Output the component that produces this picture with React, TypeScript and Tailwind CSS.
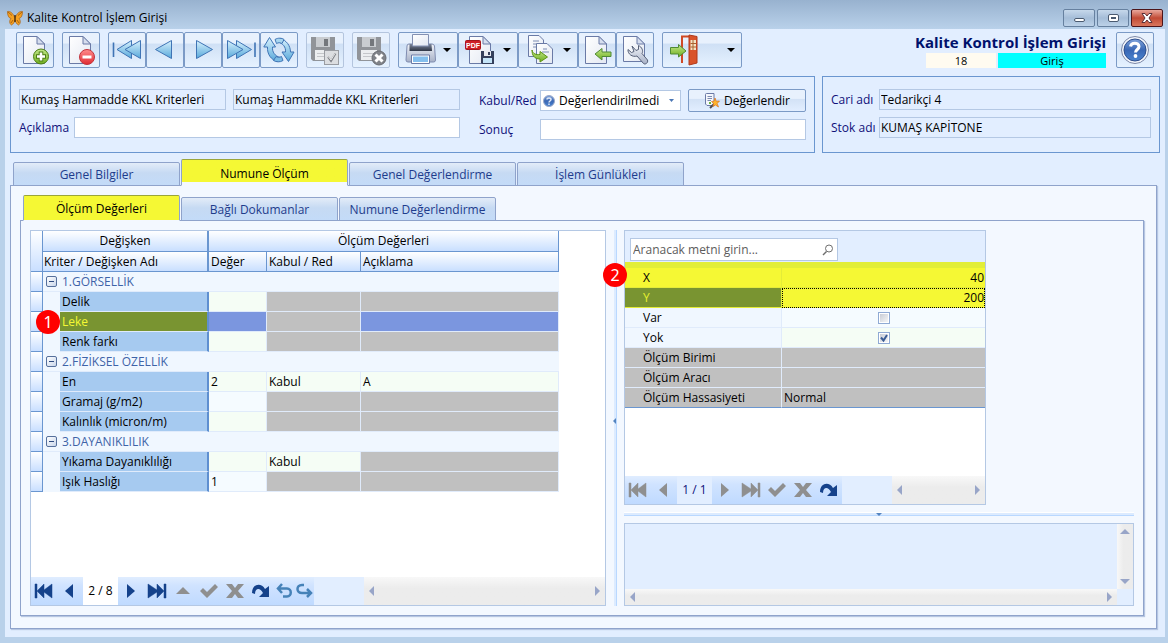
import React from "react";
import clsx from "clsx";

type Row = {
  group?: boolean;
  focused?: boolean;
  name: string;
  value?: string;
  verdict?: string;
  note?: string;
};

const rows: Row[] = [
  { group: true, name: "1.GÖRSELLİK" },
  { name: "Delik" },
  { name: "Leke", focused: true },
  { name: "Renk farkı" },
  { group: true, name: "2.FİZİKSEL ÖZELLİK" },
  { name: "En", value: "2", verdict: "Kabul", note: "A" },
  { name: "Gramaj (g/m2)" },
  { name: "Kalınlık (micron/m)" },
  { group: true, name: "3.DAYANIKLILIK" },
  { name: "Yıkama Dayanıklılığı", verdict: "Kabul" },
  { name: "Işık Haslığı", value: "1" },
];

const blueRows = ["Gramaj (g/m2)", "Işık Haslığı"];

/* ---------- toolbar icons ---------- */

function Svg({ children, size = 32, vb = "0 0 32 32" }: { children: React.ReactNode; size?: number; vb?: string }) {
  return (
    <svg width={size} height={size} viewBox={vb} fill="none" className="shrink-0" aria-hidden="true">
      {children}
    </svg>
  );
}

function Gradients() {
  return (
    <svg width="0" height="0" className="absolute" aria-hidden="true">
      <defs>
        <linearGradient id="page" x1="0" y1="0" x2="1" y2="1">
          <stop offset="0" stopColor="#ffffff" />
          <stop offset="1" stopColor="#e3e8f2" />
        </linearGradient>
        <linearGradient id="sky" x1="0" y1="0" x2="0" y2="1">
          <stop offset="0" stopColor="#d8f1fd" />
          <stop offset="1" stopColor="#56a8da" />
        </linearGradient>
        <linearGradient id="green" x1="0" y1="0" x2="0" y2="1">
          <stop offset="0" stopColor="#c3e88c" />
          <stop offset="1" stopColor="#6fae1e" />
        </linearGradient>
        <linearGradient id="red" x1="0" y1="0" x2="0" y2="1">
          <stop offset="0" stopColor="#ff8d8d" />
          <stop offset="1" stopColor="#e02a32" />
        </linearGradient>
        <linearGradient id="help" x1="0" y1="0" x2="0" y2="1">
          <stop offset="0" stopColor="#7fa3dc" />
          <stop offset="0.5" stopColor="#3a67b4" />
          <stop offset="1" stopColor="#4a84d0" />
        </linearGradient>
        <linearGradient id="steel" x1="0" y1="0" x2="0" y2="1">
          <stop offset="0" stopColor="#f2f4f9" />
          <stop offset="1" stopColor="#a6b0c6" />
        </linearGradient>
        <linearGradient id="band" x1="0" y1="0" x2="0" y2="1">
          <stop offset="0" stopColor="#7d879c" />
          <stop offset="1" stopColor="#2f3646" />
        </linearGradient>
      </defs>
    </svg>
  );
}

const Page = () => (
  <>
    <path d="M4.5 2.5H18L25.5 10V29.5H4.5Z" fill="url(#page)" stroke="#6a7aa6" />
    <path d="M18 2.5V10H25.5Z" fill="#d6deee" stroke="#6a7aa6" />
  </>
);

const NewIcon = () => (
  <Svg>
    <Page />
    <circle cx="22" cy="22.5" r="7.5" fill="url(#green)" stroke="#4d7d14" />
    <path d="M22 17.5V27.5M17 22.5H27" stroke="#4d7d14" strokeWidth="4.5" />
    <path d="M22 18.5V26.5M18 22.5H26" stroke="#fff" strokeWidth="2.6" />
  </Svg>
);

const DeleteIcon = () => (
  <Svg>
    <Page />
    <circle cx="22" cy="23" r="7.5" fill="url(#red)" stroke="#c2343c" />
    <rect x="17.5" y="21.5" width="9" height="3" fill="#fff" />
  </Svg>
);

const FirstIcon = () => (
  <Svg>
    <path d="M2.5 8.5V23" stroke="#3f74b5" strokeWidth="1.6" />
    <path d="M20.5 6.5V24.5L6 15.5Z" fill="url(#sky)" stroke="#3f74b5" />
    <path d="M29.5 6.5V24.5L14 15.5Z" fill="url(#sky)" stroke="#3f74b5" />
  </Svg>
);

const PrevIcon = () => (
  <Svg>
    <path d="M22.5 6.5V24.5L6.5 15.5Z" fill="url(#sky)" stroke="#3f74b5" />
  </Svg>
);

const NextIcon = () => (
  <Svg>
    <path d="M9.5 6.5V24.5L25.5 15.5Z" fill="url(#sky)" stroke="#3f74b5" />
  </Svg>
);

const LastIcon = () => (
  <Svg>
    <path d="M30 8.5V23" stroke="#3f74b5" strokeWidth="1.6" />
    <path d="M11.5 6.5V24.5L26.5 15.5Z" fill="url(#sky)" stroke="#3f74b5" />
    <path d="M2.5 6.5V24.5L18 15.5Z" fill="url(#sky)" stroke="#3f74b5" />
  </Svg>
);

const RefreshIcon = () => (
  <Svg>
    <path d="M6.5 3.5L12.5 13H9.5C9 18 12 22 17 23.5L14.5 27.5C8 26 4 20 4.5 13H.8Z" fill="url(#sky)" stroke="#3f74b5" />
    <path d="M25.5 27.5L19 18H22.5C23 13 20 9.5 15 8L17 4.5C23.5 6 27.5 12 27.5 18H31Z" fill="url(#sky)" stroke="#3f74b5" />
    <path d="M12 5.5C15 3.5 19 4 21 5.5L19 9.5C17 8.5 15.5 8.5 13.5 9.5Z" fill="#a8d6f0" stroke="#3f74b5" />
    <path d="M20 26.5C17 28.5 13 28 10.5 26.5L13 22.5C15 23.5 16.5 23.5 18.5 22.5Z" fill="#7cbce4" stroke="#3f74b5" />
  </Svg>
);

const Floppy = () => (
  <>
    <path d="M2 3H26V27H4L2 25Z" fill="#919499" />
    <rect x="7" y="3" width="14" height="10" fill="#c9ccd0" />
    <rect x="15" y="5" width="4" height="7" fill="#74777c" />
    <rect x="6" y="16" width="16" height="10" fill="#eceef0" />
    <path d="M8 19.5H20M8 22.5H20" stroke="#c4c6ca" />
  </>
);

const SaveIcon = () => (
  <Svg>
    <Floppy />
    <rect x="15.5" y="16.5" width="14" height="14" fill="#dcdee1" stroke="#999ca2" />
    <path d="M19 23L22 27L26.500 19.5" stroke="#808389" strokeWidth="2" />
    <path d="M19.5 23L22 26L26 19.5" stroke="#fff" strokeWidth=".8" />
  </Svg>
);

const CancelSaveIcon = () => (
  <Svg>
    <Floppy />
    <circle cx="24" cy="24" r="7" fill="#808389" stroke="#686b71" />
    <path d="M20.5 20.500L27.5 27.5M27.5 20.5L20.5 27.5" stroke="#fff" strokeWidth="3" />
  </Svg>
);

const PrinterIcon = () => (
  <Svg>
    <path d="M2 12Q2 10 4 10H27Q29 10 29.5 12L30.5 26Q30.5 28 28.5 28H3Q1 28 1 26Z" fill="url(#steel)" stroke="#7f8cb0" />
    <path d="M4.500 10H26.5L27 17H4.5Z" fill="url(#band)" />
    <path d="M7.5 .5H23.5V12H7.5Z" fill="url(#page)" stroke="#8390b2" />
    <path d="M6.5 21H24.5V29.5H6.5Z" fill="#fff" stroke="#6a7aa6" />
    <path d="M8 22.5H23V28H8Z" fill="#84bfee" />
  </Svg>
);

const PdfIcon = () => (
  <Svg>
    <Page />
    <rect x=".5" y="6.500" width="15" height="9" rx="1" fill="#cf1f27" stroke="#a3141b" />
    <text x="8" y="14" textAnchor="middle" fontSize="7" fontWeight="700" fill="#fff" fontFamily="Liberation Sans, sans-serif">PDF</text>
    <path d="M16 17H29V30H17L16 29Z" fill="#35405c" />
    <rect x="19" y="17" width="7" height="5" fill="#e8ebf2" />
    <rect x="23" y="18" width="2" height="3" fill="#35405c" />
    <rect x="18" y="24" width="9" height="5" fill="#c4e4f8" />
  </Svg>
);

const CopyIcon = () => (
  <Svg>
    <path d="M3.5 1.5H14L18.5 6V22.5H3.5Z" fill="url(#page)" stroke="#6a7aa6" />
    <path d="M8 7H14M8 10H14M8 13H12" stroke="#7d8cb3" />
    <path d="M11.5 9.5H22L27.5 15V29.5H11.5Z" fill="url(#page)" stroke="#6a7aa6" />
    <path d="M18 15H22M17 18H24" stroke="#7d8cb3" />
    <path d="M7 16C8 20 11 21 15 20.5V17.5L22.5 23L15 28V25C9 25 7 21 7 16Z" fill="url(#green)" stroke="#5d9413" />
  </Svg>
);

const ImportIcon = () => (
  <Svg>
    <Page />
    <path d="M14 20L21 14.500V18H30V22.5H21V26Z" fill="url(#green)" stroke="#4f8a35" />
  </Svg>
);

const ToolsIcon = () => (
  <Svg>
    <path d="M4.5 2.5H18L25.5 10V27.5H4.5Z" fill="url(#page)" stroke="#6a7aa6" />
    <path d="M18 2.5V10H25.5Z" fill="#d6deee" stroke="#6a7aa6" />
    <path d="M13 12L17 16.5L19.5 15.5V11.5C23 13 24.5 17 23 19.5L28.5 26C29.5 29 26 31 24.500 29.5L18 22C13.5 23.5 8.5 20 9 15.5L12.5 18.5L15 17.5Z" fill="url(#steel)" stroke="#566078" />
  </Svg>
);

const ExitIcon = () => (
  <Svg>
    <path d="M13 29V2.5H20" stroke="#d04a26" strokeWidth="2" />
    <path d="M20 1L28 2.5V29L20 31Z" fill="#d9532a" stroke="#b0391a" />
    <rect x="21.5" y="6" width="5.5" height="10" fill="#f4e3c4" />
    <path d="M24 6V16M21.5 9.500H27M21.5 13H27" stroke="#a8622f" />
    <path d="M1.5 13.5H9.5V10.5L17 17L9.5 23V20H1.5Z" fill="url(#green)" stroke="#4f8a35" />
  </Svg>
);

const HelpIcon = () => (
  <Svg>
    <circle cx="16" cy="16" r="13.5" fill="#f4f6fb" stroke="#7c88a8" />
    <circle cx="16" cy="16" r="11" fill="url(#help)" stroke="#2e4e8c" />
    <path d="M11.5 12.5C12 8 20 8 20 12.5C20 15.5 16.5 15.5 16.5 18.500" stroke="#fff" strokeWidth="3" />
    <circle cx="16.5" cy="22" r="1.9" fill="#fff" />
  </Svg>
);

const Butterfly = () => (
  <Svg size={16} vb="0 0 16 16">
    <path d="M7.500 7C6 3 3 1 .5 1.5C.5 5 1.5 8 4 8.500C2 10.5 2.5 14 4.5 15C6.500 14 7.5 12 8 10C8.5 12 9.5 14 11.5 15C13.5 14 14 10.5 12 8.5C14.5 8 15.5 5 15.500 1.5C13 1 10 3 8.5 7Z" fill="#f5a020" stroke="#a85f10" strokeWidth=".7" />
    <path d="M1 2L5 5.500M15 2L11 5.5M4 13L6 10M12 13L10 10" stroke="#8a4a0a" strokeWidth=".7" />
    <path d="M8 5V12" stroke="#3a2208" strokeWidth="1.3" />
  </Svg>
);

const EvaluateIcon = () => (
  <Svg size={16} vb="0 0 16 16">
    <path d="M1.5 1.5Q1.5 .5 2.5 .5H10V12.5H3L1.5 11Z" fill="#f5f7fc" stroke="#6a7aa6" />
    <path d="M3.5 3.5H8M3.5 5.5H8M3.5 7.5H7" stroke="#7c8bb0" />
    <path d="M5 10H7" stroke="#6bb53c" strokeWidth="2" />
    <path d="M6 15L10 11" stroke="#4c4c55" strokeWidth="2" />
    <path d="M11 5L12.2 8.2L15.5 8L13.2 10.4L14.5 14L11.5 12L9 13.5L9.5 10.5L7.5 8.5L10 8.2Z" fill="#ffb42c" stroke="#d9731c" strokeWidth=".7" />
  </Svg>
);

/* ---------- navigator icons ---------- */

type Glyph = "first" | "prev" | "next" | "last" | "up" | "check" | "cross" | "turn" | "undo" | "redo";

const glyphs: Record<Glyph, React.ReactNode> = {
  first: <path d="M1 3H3V10L10 3V9L18 3V17L10 11V17L3 10V17H1Z" fill="currentColor" stroke="currentColor" strokeWidth=".5" />,
  prev: <path d="M13 3V17L5 10Z" fill="currentColor" />,
  next: <path d="M6 3V17L14 10Z" fill="currentColor" />,
  last: <path d="M19 3H17V10L10 3V9L1 3V17L10 11V17L17 10V17H19Z" fill="currentColor" stroke="currentColor" strokeWidth=".5" />,
  up: <path d="M3 13L10 6L17 13Z" fill="currentColor" />,
  check: <path d="M1 10L4 7L8 11L16 3L19 6L8 17Z" fill="currentColor" />,
  cross: <path d="M1 3H7L10 7L13 3H19L13 10L19 17H13L10 13L7 17H1L7 10Z" fill="currentColor" />,
  turn: <path d="M1 12C1 3 10 1 14 8L18 5V16H8L12 12C9 6 4 7 4 13Z" fill="currentColor" />,
  undo: <path d="M8 3L4 7.5L8 12M4 7.5H13C18 7.5 18 15.5 13 15.5H9" stroke="currentColor" strokeWidth="2.5" />,
  redo: <path d="M10 4H8C2 4 2 12 8 12H17M13 8L17 12L13 16" stroke="currentColor" strokeWidth="2.5" />,
};

const glyphLabels: Record<Glyph, string> = {
  first: "İlk kayıt",
  prev: "Önceki kayıt",
  next: "Sonraki kayıt",
  last: "Son kayıt",
  up: "Düzenle",
  check: "Kaydet",
  cross: "İptal",
  turn: "Yenile",
  undo: "Geri al",
  redo: "Yinele",
};

function NavButton({ glyph, color }: { glyph: Glyph; color: string }) {
  const narrow = glyph === "undo" || glyph === "redo";
  return (
    <button
      type="button"
      aria-label={glyphLabels[glyph]}
      className={clsx("flex h-7 items-center justify-center bg-linear-to-b from-[#e0edff] via-[#d0e3ff] via-30% to-[#bfdaff]", narrow ? "w-5" : "w-[26px]", color)}
    >
      <Svg size={20} vb="0 0 20 20">{glyphs[glyph]}</Svg>
    </button>
  );
}

function Arrow({ d }: { d: "left" | "right" | "up" | "down" }) {
  const paths = { left: "M7 0V10L2 5Z", right: "M3 0V10L8 5Z", up: "M0 7H10L5 2Z", down: "M0 3H10L5 8Z" };
  return (
    <svg width="10" height="10" viewBox="0 0 10 10" className="text-[#98a5c8]" aria-hidden="true">
      <path d={paths[d]} fill="currentColor" />
    </svg>
  );
}

function HScroll() {
  return (
    <div className="flex min-w-0 flex-1 items-center justify-between bg-linear-to-b from-[#f8f8f8] to-[#ececec] to-40% px-[3px]">
      <Arrow d="left" />
      <Arrow d="right" />
    </div>
  );
}

const navy = "text-[#15428b]";
const gray = "text-[#8f8f8f]";

/* ---------- small controls ---------- */

function ToolButton({ label, wide, drop, disabled, children }: { label: string; wide?: boolean; drop?: boolean; disabled?: boolean; children: React.ReactNode }) {
  return (
    <button
      type="button"
      aria-label={label}
      disabled={disabled}
      className={clsx(
        "flex h-9 items-center rounded-xs border bg-linear-to-b from-[#e8f1fd] from-30% via-[#cfe0f5] via-32% to-[#e6f2ff]",
        wide ? "w-20 justify-between px-1.5" : drop ? "w-[60px] justify-between px-1.5" : "w-[38px] justify-center",
        disabled ? "border-[#b4c5de]" : "border-[#7b9ac6]"
      )}
    >
      {children}
      {drop && (
        <svg width="8" height="4" viewBox="0 0 8 4" aria-hidden="true">
          <path d="M0 0H8L4 4Z" fill="#000" />
        </svg>
      )}
    </button>
  );
}

function Tabs({ items, active, size }: { items: string[]; active: number; size: "lg" | "sm" }) {
  return (
    <div role="tablist" className={clsx("relative flex items-end gap-px px-[3px]", size === "lg" ? "h-[27px]" : "h-[26px]")}>
      {items.map((t, i) => (
        <button
          key={t}
          type="button"
          role="tab"
          aria-selected={i === active}
          className={clsx(
            "rounded-t-xs border pt-0.5",
            size === "lg" ? "w-[167px]" : "w-[157px]",
            i === active
              ? "h-full border-x-[#8fa3cb] border-t-[#9aa53a] border-b-[#f3f8ff] text-black"
              : "h-6 border-[#8fa3cb] bg-linear-to-b from-[#e3ecf8] via-[#c6daf3] via-45% to-[#c3dbf8] text-[#1e3c8c]",
            i === active && (size === "lg" ? "bg-linear-to-b from-[#f5f834] from-88% to-[#f3f8ff] to-88%" : "bg-[#f5f834]")
          )}
        >
          {t}
        </button>
      ))}
    </div>
  );
}

function Badge({ n, className }: { n: number; className: string }) {
  return (
    <span className={clsx("absolute z-10 flex size-6 items-center justify-center rounded-full bg-[#ff0000] font-['Noto_Sans',sans-serif] text-base leading-none text-white", className)}>
      {n}
    </span>
  );
}

const field = "h-[21px] min-w-0 border border-[#b4c8e4] px-px text-black";

function CaptionButton({ label, close, children }: { label: string; close?: boolean; children: React.ReactNode }) {
  return (
    <button
      type="button"
      aria-label={label}
      className={clsx(
        "flex h-[18px] w-8 items-center justify-center rounded-xs border",
        close ? "border-[#4c1419] bg-linear-to-b from-[#e8a79c] via-[#c14a35] via-50% to-[#d9765c]" : "border-[#66809f] bg-linear-to-b from-[#c6d8eb] via-[#a5bdd8] via-50% to-[#bcd1e8]"
      )}
    >
      {children}
    </button>
  );
}

/* ---------- grids ---------- */

const headCell = "border-b border-[#6a96d0] bg-linear-to-b from-white to-[#c9dfff] p-0 font-normal";

function MeasureTable() {
  return (
    <table className="w-[528px] table-fixed border-separate border-spacing-0 leading-[18px]">
      <colgroup>
        <col className="w-3" />
        <col className="w-[17px]" />
        <col className="w-[149px]" />
        <col className="w-[58px]" />
        <col className="w-[94px]" />
        <col className="w-[198px]" />
      </colgroup>
      <thead>
        <tr>
          <th rowSpan={2} className={clsx(headCell, "border-r")} />
          <th colSpan={2} className={clsx(headCell, "h-[21px] border-r-2 text-center")}>Değişken</th>
          <th colSpan={3} className={clsx(headCell, "border-r text-center")}>Ölçüm Değerleri</th>
        </tr>
        <tr>
          <th colSpan={2} className={clsx(headCell, "h-5 border-r-2 pl-px text-left")}>Kriter / Değişken Adı</th>
          <th className={clsx(headCell, "border-r pl-0.5 text-left")}>Değer</th>
          <th className={clsx(headCell, "border-r pl-0.5 text-left")}>Kabul / Red</th>
          <th className={clsx(headCell, "border-r pl-0.5 text-left")}>Açıklama</th>
        </tr>
      </thead>
      <tbody>
        {rows.map((r) => {
          const tint = blueRows.includes(r.name) ? "bg-[#f5fbff]" : "bg-[#f5fdf5]";
          const line = "h-5 border-b border-[#e0ebfb] p-0";
          const cell = clsx(line, "border-r pl-0.5");
          return (
            <tr key={r.name}>
              <td className="relative h-5 border-r border-b border-[#6a96d0] bg-linear-to-b from-white to-[#c9dfff] p-0">
                {r.focused && <Badge n={1} className="-top-0.5 left-[5px]" />}
              </td>
              {r.group ? (
                <>
                  <td className={clsx(line, "bg-[#f0f7ff]")}>
                    <button type="button" aria-label="Grubu daralt" className="ml-[3px] flex size-[11px] items-center justify-center rounded-xs border border-[#56709c] bg-linear-to-br from-white to-[#c9d6ea]">
                      <span className="h-px w-[5px] bg-[#2d4a80]" />
                    </button>
                  </td>
                  <td colSpan={4} className={clsx(line, "bg-[#f0f7ff] pl-0.5 text-[#3e63a8]")}>{r.name}</td>
                </>
              ) : (
                <>
                  <td className="bg-[#f0f7ff] p-0" />
                  <td className={clsx("h-5 border-r-2 border-b border-r-[#5f8fd0] border-b-[#e0ebfb] p-0 pl-0.5", r.focused ? "bg-[#799431] text-[#f5f834]" : "bg-[#a6caf0]")}>{r.name}</td>
                  <td className={clsx(cell, r.focused ? "bg-[#7b96df]" : tint)}>{r.value}</td>
                  <td className={clsx(cell, r.verdict ? tint : "bg-[#c0c0c0]")}>{r.verdict}</td>
                  <td className={clsx(cell, r.focused ? "bg-[#7b96df]" : r.note ? tint : "bg-[#c0c0c0]")}>{r.note}</td>
                </>
              )}
            </tr>
          );
        })}
      </tbody>
    </table>
  );
}

function Check({ label, checked }: { label: string; checked?: boolean }) {
  return (
    <span className="relative mx-auto block size-3">
      <input type="checkbox" aria-label={label} defaultChecked={checked} className="block size-3 appearance-none border border-[#8faad4] bg-linear-to-br from-[#c3c8d2] to-[#fbfbfb] shadow-[inset_0_0_0_1px_#fff]" />
      {checked && (
        <svg width="12" height="12" viewBox="0 0 12 12" className="pointer-events-none absolute inset-0" fill="none" aria-hidden="true">
          <path d="M3 5.5L5.5 8.5L9 3" stroke="#3a5c94" strokeWidth="2" />
        </svg>
      )}
    </span>
  );
}

function PropertyTable() {
  const name = "h-5 border-r border-b p-0 pl-[18px]";
  const val = "border-b p-0 pl-0.5 pr-px";
  return (
    <table className="w-full table-fixed border-separate border-spacing-0 leading-[18px]">
      <colgroup>
        <col className="w-[157px]" />
        <col />
      </colgroup>
      <tbody>
        <tr className="bg-[#f5f834]">
          <td className={clsx(name, "border-[#e4ec38]")}>X</td>
          <td className={clsx(val, "border-[#e4ec38] text-right")}>40</td>
        </tr>
        <tr>
          <td className={clsx(name, "border-[#e4ec38] bg-[#799431] text-[#e6f02e]")}>Y</td>
          <td className="border border-dotted border-black bg-[#f5f834] p-0 text-right">200</td>
        </tr>
        <tr>
          <td className={clsx(name, "border-[#e0ebfb] bg-[#f0f7ff]")}>Var</td>
          <td className={clsx(val, "border-[#e0ebfb] bg-[#f5fbff]")}><Check label="Var" /></td>
        </tr>
        <tr>
          <td className={clsx(name, "border-[#e0ebfb] bg-[#f0f7ff]")}>Yok</td>
          <td className={clsx(val, "border-[#e0ebfb] bg-[#f5fdf5]")}><Check label="Yok" checked /></td>
        </tr>
        {["Ölçüm Birimi", "Ölçüm Aracı"].map((t) => (
          <tr key={t} className="bg-[#c0c0c0]">
            <td className={clsx(name, "border-[#e0ebfb]")}>{t}</td>
            <td className={clsx(val, "border-[#e0ebfb]")} />
          </tr>
        ))}
        <tr className="bg-[#c0c0c0]">
          <td className={clsx(name, "border-r-[#e0ebfb] border-b-[#6a96d0]")}>Ölçüm Hassasiyeti</td>
          <td className={clsx(val, "border-[#6a96d0]")}>Normal</td>
        </tr>
      </tbody>
    </table>
  );
}

export default function App() {
  return (
    <div className="flex min-h-screen flex-col bg-[#b9d1ea] pr-[3px] pb-1.5 pl-[5px] font-['Open_Sans',sans-serif] text-xs text-black">
      <Gradients />

      {/* Title bar */}
      <header className="-mr-[3px] -ml-[5px] flex h-[29px] items-center justify-between bg-linear-to-b from-[#98b2cf] to-[#b9d1ea] pt-1.5 pr-[5px] pl-[7px]">
        <div className="flex items-center gap-1">
          <Butterfly />
          <span>Kalite Kontrol İşlem Girişi</span>
        </div>
        <div className="flex gap-0.5">
          <CaptionButton label="Simge durumuna küçült">
            <span className="mt-1 h-1 w-[11px] rounded-xs border border-[#4a5a70] bg-white" />
          </CaptionButton>
          <CaptionButton label="Ekranı kapla">
            <span className="flex h-2 w-[11px] items-center justify-center rounded-xs border border-[#4a5a70] bg-white">
              <span className="h-0.5 w-[5px] bg-[#4a5a70]" />
            </span>
          </CaptionButton>
          <CaptionButton label="Kapat" close>
            <svg width="12" height="10" viewBox="0 0 12 10" aria-hidden="true">
              <path d="M1 .5H4L6 3L8 .5H11L8 5L11 9.5H8L6 7L4 9.5H1L4 5Z" fill="#fff" stroke="#5a3038" />
            </svg>
          </CaptionButton>
        </div>
      </header>

      <main className="flex flex-1 flex-col bg-[#e2eeff] px-[5px] pb-2">
        {/* Toolbar */}
        <div className="flex justify-between pt-[3px] pr-1.5 pl-1.5">
          <div className="flex gap-2">
            <ToolButton label="Yeni"><NewIcon /></ToolButton>
            <ToolButton label="Sil"><DeleteIcon /></ToolButton>
            <div className="flex">
              <ToolButton label="İlk"><FirstIcon /></ToolButton>
              <ToolButton label="Önceki"><PrevIcon /></ToolButton>
              <ToolButton label="Sonraki"><NextIcon /></ToolButton>
              <ToolButton label="Son"><LastIcon /></ToolButton>
              <ToolButton label="Yenile"><RefreshIcon /></ToolButton>
            </div>
            <ToolButton label="Kaydet" disabled><SaveIcon /></ToolButton>
            <ToolButton label="Vazgeç" disabled><CancelSaveIcon /></ToolButton>
            <div className="flex">
              <ToolButton label="Yazdır" drop><PrinterIcon /></ToolButton>
              <ToolButton label="PDF kaydet" drop><PdfIcon /></ToolButton>
              <ToolButton label="Kopyala" drop><CopyIcon /></ToolButton>
              <ToolButton label="İçe aktar"><ImportIcon /></ToolButton>
              <ToolButton label="Araçlar"><ToolsIcon /></ToolButton>
            </div>
            <ToolButton label="Çıkış" wide drop><ExitIcon /></ToolButton>
          </div>
          <div className="flex gap-2.5">
            <div className="flex flex-col items-end">
              <h1 className="h-[21px] text-[15px] leading-[21px] font-bold text-[#00116b]">Kalite Kontrol İşlem Girişi</h1>
              <div className="flex gap-0.5 text-center text-[11px] leading-[15px]">
                <span className="h-[15px] w-[70px] bg-[#fffbf0]">18</span>
                <span className="h-[15px] w-[108px] bg-[#00ffff]">Giriş</span>
              </div>
            </div>
            <ToolButton label="Yardım"><HelpIcon /></ToolButton>
          </div>
        </div>

        {/* Record header */}
        <div className="mt-2 flex gap-[7px] text-[#10107a]">
          <section className="flex h-[77px] w-[805px] justify-between border border-[#6a96d0] px-2 pt-3">
            <div className="flex w-[441px] flex-col gap-[7px]">
              <div className="flex gap-[7px]">
                <input readOnly aria-label="Plan kodu" defaultValue="Kumaş Hammadde KKL Kriterleri" className={clsx(field, "w-[207px]")} />
                <input readOnly aria-label="Plan adı" defaultValue="Kumaş Hammadde KKL Kriterleri" className={clsx(field, "flex-1")} />
              </div>
              <div className="flex items-center">
                <label htmlFor="aciklama" className="w-[55px]">Açıklama</label>
                <input id="aciklama" className={clsx(field, "flex-1 bg-white")} />
              </div>
            </div>
            <div className="flex w-[327px] flex-col gap-[7px]">
              <div className="flex h-[23px] items-center">
                <label htmlFor="kabul" className="w-[61px]">Kabul/Red</label>
                <div className="relative mr-[7px] flex-1">
                  <select id="kabul" className={clsx(field, "block w-full appearance-none bg-white pl-[18px]")}>
                    <option>Değerlendirilmedi</option>
                  </select>
                  <svg width="12" height="12" viewBox="0 0 12 12" className="pointer-events-none absolute top-[5px] left-[3px]" fill="none" aria-hidden="true">
                    <circle cx="6" cy="6" r="5.5" fill="url(#help)" stroke="#9aa8c8" />
                    <path d="M4 4.5C4 2.5 8 2.5 8 4.5C8 6 6 6 6 7.5M6 8.5V10" stroke="#dfe8f6" strokeWidth="1.5" />
                  </svg>
                  <svg width="5" height="3" viewBox="0 0 5 3" className="pointer-events-none absolute top-[9px] right-[7px]" aria-hidden="true">
                    <path d="M0 0H5L2.5 3Z" fill="#4a76b4" />
                  </svg>
                </div>
                <button type="button" className="flex h-[23px] w-[118px] items-center justify-center gap-1 rounded-xs border border-[#7b9ac6] bg-linear-to-b from-[#e8f1fd] from-40% via-[#d3e2f6] via-45% to-[#e2eeff] text-black">
                  <EvaluateIcon />
                  Değerlendir
                </button>
              </div>
              <div className="flex items-center">
                <label htmlFor="sonuc" className="w-[61px]">Sonuç</label>
                <input id="sonuc" className={clsx(field, "flex-1 bg-white")} />
              </div>
            </div>
          </section>
          <section className="flex h-[77px] flex-1 flex-col gap-[7px] border border-[#6a96d0] px-2 pt-3">
            <div className="flex items-center">
              <label htmlFor="cari" className="w-12">Cari adı</label>
              <input id="cari" readOnly defaultValue="Tedarikçi 4" className={clsx(field, "flex-1")} />
            </div>
            <div className="flex items-center">
              <label htmlFor="stok" className="w-12 whitespace-nowrap">Stok adı</label>
              <input id="stok" readOnly defaultValue="KUMAŞ KAPİTONE" className={clsx(field, "flex-1")} />
            </div>
          </section>
        </div>

        {/* Tabs */}
        <div className="mt-1.5 mr-[3px] flex flex-1 flex-col">
          <Tabs size="lg" active={1} items={["Genel Bilgiler", "Numune Ölçüm", "Genel Değerlendirme", "İşlem Günlükleri"]} />
          <div className="-mt-px flex flex-1 flex-col border border-[#8fa3cb] bg-[#f3f8ff] pt-[9px] pr-3 pb-3 pl-[9px] shadow-[1px_1px_1px_#b6c6e2]">
            <Tabs size="sm" active={0} items={["Ölçüm Değerleri", "Bağlı Dokumanlar", "Numune Değerlendirme"]} />
            <div className="-mt-px flex flex-1 border border-[#8fa3cb] bg-[#f3f8ff] p-[9px] shadow-[1px_1px_1px_#b6c6e2]">
              {/* Left grid */}
              <section className="flex w-[576px] flex-col border border-[#b4c8e4] bg-white">
                <div className="flex-1">
                  <MeasureTable />
                </div>
                <div className="flex bg-[#e2eeff]">
                  <NavButton glyph="first" color={navy} />
                  <NavButton glyph="prev" color={navy} />
                  <span className="w-[35px] bg-white text-center leading-7">2 / 8</span>
                  <NavButton glyph="next" color={navy} />
                  <NavButton glyph="last" color={navy} />
                  <NavButton glyph="up" color={gray} />
                  <NavButton glyph="check" color={gray} />
                  <NavButton glyph="cross" color={gray} />
                  <NavButton glyph="turn" color={navy} />
                  <NavButton glyph="undo" color="text-[#4682b8]" />
                  <NavButton glyph="redo" color="text-[#4682b8]" />
                  <div className="w-[50px]" />
                  <HScroll />
                </div>
              </section>

              {/* Vertical splitter */}
              <div className="flex w-[18px] items-stretch justify-center">
                <div className="relative w-[3px] border-r border-[#b9d8ff] bg-[#dcebff]">
                  <svg width="3" height="6" viewBox="0 0 3 6" className="absolute top-1/2 right-0" aria-hidden="true">
                    <path d="M3 0V6L0 3Z" fill="#5484c0" />
                  </svg>
                </div>
              </div>

              <div className="flex flex-1 flex-col">
                <section className="relative flex w-[362px] flex-1 flex-col border border-[#b4c8e4] bg-white">
                  <Badge n={2} className="top-8 -left-[22px]" />
                  <div className="bg-[#e2eeff] pt-[7px] pl-[5px]">
                    <div className="relative h-6 w-[208px]">
                      <input type="search" aria-label="Ara" placeholder="Aranacak metni girin..." className="block h-[23px] w-full appearance-none border border-[#b4c8e4] bg-white px-0.5 placeholder:text-[#5c5c5c]" />
                      <svg width="12" height="12" viewBox="0 0 12 12" className="pointer-events-none absolute top-1.5 right-1" fill="none" aria-hidden="true">
                        <circle cx="7" cy="4.5" r="3.5" stroke="#6e6e6e" />
                        <path d="M4.5 7.5L1 11" stroke="#6e6e6e" strokeWidth="1.5" />
                      </svg>
                    </div>
                  </div>
                  <div className="h-1.5 bg-[#e2ee38]" />
                  <div className="flex-1">
                    <PropertyTable />
                  </div>
                  <div className="flex bg-[#e2eeff]">
                    <NavButton glyph="first" color={gray} />
                    <NavButton glyph="prev" color={gray} />
                    <span className="w-[35px] text-center leading-7 text-[#10107a]">1 / 1</span>
                    <NavButton glyph="next" color={gray} />
                    <NavButton glyph="last" color={gray} />
                    <NavButton glyph="check" color={gray} />
                    <NavButton glyph="cross" color={gray} />
                    <NavButton glyph="turn" color={navy} />
                    <div className="w-[50px]" />
                    <HScroll />
                  </div>
                </section>

                {/* Horizontal splitter */}
                <div className="flex h-[18px] flex-col justify-center">
                  <div className="relative h-1 border-t border-b border-t-white border-b-[#b9d8ff] bg-[#dcebff]">
                    <svg width="6" height="3" viewBox="0 0 6 3" className="absolute top-0 left-1/2 -translate-x-1/2" aria-hidden="true">
                      <path d="M0 0H6L3 3Z" fill="#5484c0" />
                    </svg>
                  </div>
                </div>

                <section className="flex h-[83px] border border-[#b4c8e4] bg-[#e2eeff]">
                  <div className="flex flex-1 flex-col">
                    <textarea readOnly aria-label="Not" className="w-full flex-1 resize-none" />
                    <div className="flex h-4">
                      <HScroll />
                    </div>
                  </div>
                  <div className="mb-4 flex w-4 flex-col items-center justify-between bg-linear-to-r from-[#f8f8f8] to-[#ececec] to-40% py-[3px]">
                    <Arrow d="up" />
                    <Arrow d="down" />
                  </div>
                </section>
              </div>
            </div>
          </div>
        </div>
      </main>
    </div>
  );
}
